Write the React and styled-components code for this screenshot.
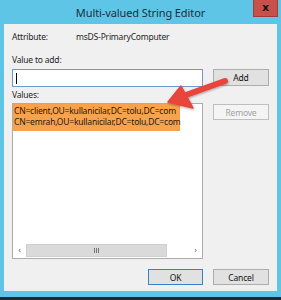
import React from "react";
import styled, { createGlobalStyle } from "styled-components";

const Global = createGlobalStyle`
  html, body { margin: 0; padding: 0; background: #5fc5e6; }
  body { font-family: "Noto Sans", "Liberation Sans", sans-serif; }
`;

const Window = styled.div`
  position: relative;
  width: 281px;
  height: 300px;
  background: #5fc5e6;
  display: flex;
  flex-direction: column;
  overflow: hidden;
`;

const TitleBar = styled.div`
  position: relative;
  height: 24px;
  flex: none;
  display: flex;
  align-items: center;
  justify-content: center;
  font-size: 11px;
  letter-spacing: -0.1px;
  color: #1b2f3e;
  padding-top: 1px;
  box-sizing: border-box;
`;

const CloseBtn = styled.div`
  position: absolute;
  top: 0;
  right: 3px;
  width: 25px;
  height: 17px;
  background: #c7504b;
  border: 1px solid #a33a36;
  border-top: none;
  box-sizing: border-box;
  display: flex;
  align-items: center;
  justify-content: center;
  font-family: "DejaVu Sans", sans-serif;
  font-weight: bold;
  font-size: 11px;
  line-height: 1;
  padding-bottom: 2px;
  color: #111;
`;

const Client = styled.div`
  margin: 0 4px;
  height: 267px;
  background: #f0f0f0;
  padding: 7px 8px 0 8px;
  box-sizing: border-box;
  display: flex;
  flex-direction: column;
  font-family: "Noto Sans", "Liberation Sans", sans-serif;
  font-size: 8.5px;
  letter-spacing: -0.2px;
  color: #262626;
`;

const BottomEdge = styled.div`
  flex: 1;
  display: flex;
  flex-direction: column;
  justify-content: flex-end;
`;

const DarkStrip = styled.div`
  height: 3px;
  background: #1c2a37;
`;

const AttrRow = styled.div`
  display: flex;
  height: 12px;
  line-height: 12px;
`;

const AttrLabel = styled.div`
  width: 64px;
`;

const Label = styled.div`
  height: 12px;
  line-height: 12px;
  margin-top: ${(p) => p.$mt}px;
`;

const Row = styled.div`
  display: flex;
  gap: 10px;
  margin-top: ${(p) => p.$mt}px;
  align-items: flex-start;
`;

const Input = styled.div`
  width: 191px;
  height: 18px;
  box-sizing: border-box;
  background: #fff;
  border: 1px solid #6f9ad0;
  display: flex;
  align-items: center;
  padding-left: 3px;
`;

const Caret = styled.div`
  width: 1px;
  height: 11px;
  background: #000;
`;

const Button = styled.div`
  width: ${(p) => p.$w || 56}px;
  height: ${(p) => p.$h || 16}px;
  margin-top: ${(p) => p.$mt || 0}px;
  box-sizing: border-box;
  display: flex;
  align-items: center;
  justify-content: center;
  font-size: 8.5px;
  background: ${(p) => (p.$disabled ? "#f4f4f4" : "#e1e1e1")};
  border: 1px solid
    ${(p) => (p.$default ? "#3c7fcf" : p.$disabled ? "#bfbfbf" : "#acacac")};
  color: ${(p) => (p.$disabled ? "#a2a2a2" : "#111")};
`;

const ListBox = styled.div`
  width: 191px;
  height: 156px;
  box-sizing: border-box;
  background: #fff;
  border: 1px solid #acacac;
  display: flex;
  flex-direction: column;
`;

const Items = styled.div`
  flex: 1;
`;

const Selected = styled.div`
  width: 167px;
  height: 27px;
  background: #f9a24c;
  padding-top: 1px;
  box-sizing: border-box;
`;

const Item = styled.div`
  height: 11px;
  line-height: 11px;
  padding-left: 1px;
  white-space: nowrap;
  color: #2a1a0a;
`;

const ScrollBar = styled.div`
  height: 13px;
  display: flex;
  align-items: stretch;
  margin: 0 0 1px 0;
`;

const ScrollArrow = styled.div`
  width: 13px;
  display: flex;
  align-items: center;
  justify-content: center;
  color: #606060;
  font-size: 8px;
  font-family: "DejaVu Sans", sans-serif;
`;

const Thumb = styled.div`
  width: 141px;
  background: #dadada;
  border: 1px solid #cfcfcf;
  box-sizing: border-box;
  display: flex;
  align-items: center;
  justify-content: center;
`;

const Grip = styled.div`
  width: 5px;
  height: 5px;
  border-left: 1px solid #777;
  border-right: 1px solid #777;
  box-sizing: border-box;
  background: linear-gradient(#777, #777) center / 1px 100% no-repeat;
`;

const Track = styled.div`
  flex: 1;
`;

const Footer = styled.div`
  display: flex;
  justify-content: flex-end;
  gap: 10px;
  margin-top: 10px;
`;

const ArrowSvg = styled.svg`
  position: absolute;
  left: 0;
  top: 0;
  pointer-events: none;
`;

export default function App() {
  return (
    <>
      <Global />
      <Window>
        <TitleBar>
          Multi-valued String Editor
          <CloseBtn>x</CloseBtn>
        </TitleBar>
        <Client>
          <AttrRow>
            <AttrLabel>Attribute:</AttrLabel>
            <div>msDS-PrimaryComputer</div>
          </AttrRow>
          <Label $mt={11}>Value to add:</Label>
          <Row $mt={3}>
            <Input>
              <Caret />
            </Input>
            <Button $h={17}>Add</Button>
          </Row>
          <Label $mt={2}>Values:</Label>
          <Row $mt={2}>
            <ListBox>
              <Items>
                <Selected>
                  <Item>CN=client,OU=kullanicilar,DC=tolu,DC=com</Item>
                  <Item>CN=emrah,OU=kullanicilar,DC=tolu,DC=com</Item>
                </Selected>
              </Items>
              <ScrollBar>
                <ScrollArrow>‹</ScrollArrow>
                <Thumb>
                  <Grip />
                </Thumb>
                <Track />
                <ScrollArrow>›</ScrollArrow>
              </ScrollBar>
            </ListBox>
            <Button $mt={1} $disabled>
              Remove
            </Button>
          </Row>
          <Footer>
            <Button $w={55} $default>
              OK
            </Button>
            <Button>Cancel</Button>
          </Footer>
        </Client>
        <BottomEdge>
          <DarkStrip />
        </BottomEdge>
        <ArrowSvg width="281" height="300" viewBox="0 0 281 300">
          <defs>
            <filter id="sh" x="-20%" y="-20%" width="140%" height="140%">
              <feDropShadow dx="0.5" dy="1" stdDeviation="0.8" floodColor="#000" floodOpacity="0.35" />
            </filter>
          </defs>
          <g filter="url(#sh)" fill="#e8443c" stroke="#e8443c">
            <line x1="186" y1="95" x2="225" y2="81" strokeWidth="6" strokeLinecap="round" />
            <polygon points="168,102 181,86 193,108" strokeWidth="1.5" strokeLinejoin="round" />
          </g>
        </ArrowSvg>
      </Window>
    </>
  );
}
